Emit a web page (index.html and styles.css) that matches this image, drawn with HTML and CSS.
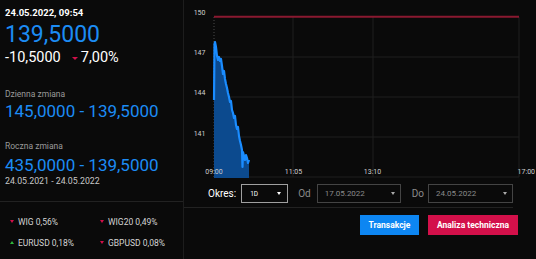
FILE: index.html
```html
<!DOCTYPE html>
<html lang="pl">
<head>
    <meta charset="UTF-8">
    <meta name="viewport" content="width=device-width, initial-scale=1.0">
    <title>Notowania</title>
    <link rel="stylesheet" href="styles.css">
</head>
<body>

    <div class="page">
        <aside class="quote">
            <div class="quote-main">
                <div class="quote-time">24.05.2022, 09:54</div>
                <div class="quote-price">139,5000</div>
                <div class="quote-change">
                    <span>-10,5000</span>
                    <span class="tri tri-down"></span>
                    <span>7,00%</span>
                </div>

                <div class="range-label">Dzienna zmiana</div>
                <div class="range-value">145,0000 - 139,5000</div>

                <div class="range-label range-label-year">Roczna zmiana</div>
                <div class="range-value range-value-year">435,0000 - 139,5000</div>
                <div class="range-dates">24.05.2021 - 24.05.2022</div>
            </div>

            <ul class="markets">
                <li><span class="tri-sm tri-down"></span>WIG 0,56%</li>
                <li><span class="tri-sm tri-down"></span>WIG20 0,49%</li>
                <li><span class="tri-sm tri-up"></span>EURUSD 0,18%</li>
                <li><span class="tri-sm tri-down"></span>GBPUSD 0,08%</li>
            </ul>
        </aside>

        <main class="chart-panel">
            <svg class="chart" width="351" height="180" viewBox="0 0 351 180">
                <!-- grid -->
                <g class="grid">
                    <line x1="30" y1="57" x2="335" y2="57"/>
                    <line x1="30" y1="97" x2="335" y2="97"/>
                    <line x1="30" y1="137" x2="335" y2="137"/>
                    <line x1="30" y1="177" x2="335" y2="177"/>
                    <line x1="109" y1="17" x2="109" y2="177"/>
                    <line x1="189" y1="17" x2="189" y2="177"/>
                    <line x1="335" y1="17" x2="335" y2="177"/>
                </g>
                <line class="open-line" x1="30" y1="17" x2="30" y2="177"/>
                <line class="ref-line" x1="30" y1="16.8" x2="335" y2="16.8"/>

                <!-- price -->
                <path class="area" d="M30 178 L30 100 L30.5 44 L31 42 L32 47 L33 56 L34 60 L35 57 L36 61 L37 59 L38 66 L39 74 L40 71 L41 79 L42 84 L43 88 L44 93 L45 97 L46 102 L47 101 L48 110 L49 113 L50 118 L51 116 L52 125 L53 129 L54 127 L55 136 L56 141 L57 145 L58 150 L58.5 167 L59 152 L60 156 L61 160 L62 155 L63 158 L64 163 L65 160 L65 178 Z"/>
                <path class="price" d="M30 100 L30.5 44 L31 42 L32 47 L33 56 L34 60 L35 57 L36 61 L37 59 L38 66 L39 74 L40 71 L41 79 L42 84 L43 88 L44 93 L45 97 L46 102 L47 101 L48 110 L49 113 L50 118 L51 116 L52 125 L53 129 L54 127 L55 136 L56 141 L57 145 L58 150 L58.5 167 L59 152 L60 156 L61 160 L62 155 L63 158 L64 163 L65 160"/>

                <g class="axis-y">
                    <text x="21.5" y="14.5">150</text>
                    <text x="21.5" y="55">147</text>
                    <text x="21.5" y="95.3">144</text>
                    <text x="21.5" y="135.6">141</text>
                </g>
                <g class="axis-x">
                    <text x="30" y="174">09:00</text>
                    <text x="109.5" y="174">11:05</text>
                    <text x="188.5" y="174">13:10</text>
                    <text x="351" y="174" class="axis-end">17:00</text>
                </g>
            </svg>

            <div class="controls-wrap">
                <div class="controls">
                    <label class="ctl-label">Okres:</label>
                    <div class="select select-period">
                        <span>1D</span>
                        <span class="caret"></span>
                    </div>
                    <label class="ctl-label ctl-dim ctl-from">Od</label>
                    <div class="select select-date">
                        <span>17.05.2022</span>
                        <span class="caret caret-dim"></span>
                    </div>
                    <label class="ctl-label ctl-dim ctl-to">Do</label>
                    <div class="select select-date select-date-to">
                        <span>24.05.2022</span>
                        <span class="caret caret-dim"></span>
                    </div>
                </div>
            </div>

            <div class="actions">
                <button class="btn btn-trade">Transakcje</button>
                <button class="btn btn-analysis">Analiza techniczna</button>
            </div>
        </main>
    </div>

</body>
</html>
```
FILE: styles.css
```css
body {
    margin: 0;
    background: #0a0a0a;
    color: #fff;
    font-family: Roboto, "Liberation Sans", sans-serif;
}
.page {
    display: flex;
    width: 536px;
    height: 259px;
    overflow: hidden;
}

/* left column */
.quote {
    width: 183px;
    border-right: 1px solid #1d1d1d;
    flex-shrink: 0;
}
.quote-main {
    height: 202px;
    box-sizing: border-box;
    padding: 7px 0 0 5px;
    border-bottom: 1px solid #222;
}
.quote-time {
    font-size: 9.5px;
    font-weight: 700;
    line-height: 12px;
}
.quote-price {
    margin-top: 3px;
    font-size: 23px;
    line-height: 26px;
    color: #1c8cf5;
}
.quote-change {
    margin-top: 1px;
    display: flex;
    align-items: center;
    font-size: 14.5px;
    line-height: 17px;
}
.tri {
    width: 0;
    height: 0;
    margin: 1px 3px 0 11px;
    border-left: 3px solid transparent;
    border-right: 3px solid transparent;
}
.tri-down {
    border-top: 3px solid #d3104a;
}
.tri-up {
    border-bottom: 3px solid #2fb83c;
}
.range-label {
    margin-top: 23px;
    font-size: 8.5px;
    line-height: 11px;
    color: #9a9a9a;
}
.range-label-year {
    margin-top: 20px;
}
.range-value {
    margin-top: 1px;
    font-size: 17px;
    line-height: 20px;
    color: #1c8cf5;
}
.range-value-year {
    margin-top: 3px;
}
.range-dates {
    margin-top: 1px;
    font-size: 8.75px;
    line-height: 11px;
    color: #c8c8c8;
}

.markets {
    list-style: none;
    margin: 0;
    padding: 15px 0 0 10px;
    display: grid;
    grid-template-columns: 90px 1fr;
    row-gap: 10px;
}
.markets li {
    display: flex;
    align-items: center;
    font-size: 8.5px;
    line-height: 11px;
    color: #d4d4d4;
}
.tri-sm {
    width: 0;
    height: 0;
    margin: -2px 4px 0 0;
    border-left: 2.5px solid transparent;
    border-right: 2.5px solid transparent;
}

/* chart column */
.chart-panel {
    flex: 1;
    display: flex;
    flex-direction: column;
}
.chart {
    display: block;
}
.grid line {
    stroke: #1e1e1e;
    stroke-width: 1;
}
.open-line {
    stroke: #4a4a4a;
    stroke-width: 1;
    stroke-dasharray: 1 2;
}
.ref-line {
    stroke: #8a1930;
    stroke-width: 2;
}
.area {
    fill: #0c4a8e;
}
.price {
    fill: none;
    stroke: #1a8cff;
    stroke-width: 2.2;
    stroke-linejoin: round;
}
.axis-y text {
    font-size: 7px;
    fill: #cfcfcf;
    text-anchor: end;
}
.axis-x text {
    font-size: 7px;
    fill: #cfcfcf;
    text-anchor: middle;
}
.axis-x .axis-end {
    text-anchor: end;
}

.controls-wrap {
    margin: 4px 23px 0 0;
    padding-bottom: 4px;
    border-bottom: 1px solid #222;
}
.controls {
    display: flex;
    align-items: center;
    height: 19px;
    padding-left: 24px;
}
.ctl-label {
    font-size: 10px;
    color: #fff;
    margin-right: 5px;
}
.ctl-dim {
    color: #8a8a8a;
    font-size: 10px;
}
.ctl-from {
    margin-left: 10px;
    margin-right: 6px;
}
.ctl-to {
    margin-left: 11px;
    margin-right: 4px;
}
.select {
    height: 19px;
    box-sizing: border-box;
    display: flex;
    align-items: center;
    justify-content: space-between;
    border: 1px solid #a0a0a0;
}
.select-period {
    width: 47px;
    padding: 0 6px 0 8px;
    font-size: 6.5px;
}
.select-date {
    width: 84px;
    padding: 0 5px 0 7px;
    border-color: #444;
    font-size: 8px;
    color: #8a8a8a;
}
.select-date-to {
    width: 85px;
}
.caret {
    width: 0;
    height: 0;
    border-left: 2.5px solid transparent;
    border-right: 2.5px solid transparent;
    border-top: 3px solid #fff;
}
.caret-dim {
    border-top-color: #aaa;
}

.actions {
    display: flex;
    justify-content: flex-end;
    gap: 9px;
    margin-top: 7px;
    padding-right: 18px;
}
.btn {
    height: 20px;
    border: none;
    color: #fff;
    font-family: Roboto, "Liberation Sans", sans-serif;
    font-size: 8.5px;
    font-weight: 700;
    padding: 0;
    cursor: pointer;
}
.btn-trade {
    width: 59px;
    background: #0d86f2;
}
.btn-analysis {
    width: 90px;
    background: #d3104a;
}
```
